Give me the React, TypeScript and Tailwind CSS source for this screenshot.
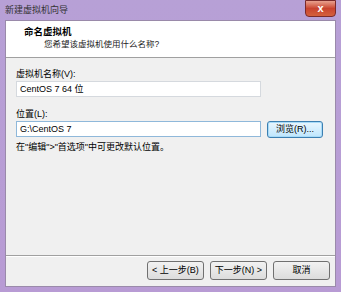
import React from 'react';

export default function App() {
    const font = { fontFamily: '"Liberation Sans", "Noto Sans CJK SC", sans-serif' };
    const btn = 'w-[57px] h-[19px] rounded-[3px] border border-[#707070] bg-gradient-to-b from-[#f2f2f2] to-[#dcdcdc] flex items-center justify-center text-[9px] leading-none whitespace-nowrap';

    return (
        <div className="w-[341px] h-[292px] flex flex-col bg-gradient-to-b from-[#b7a0d6] to-[#b89bd4] text-[9px] text-black" style={font}>
            {/* Title bar */}
            <div className="h-[20px] flex items-start justify-between pl-[5px] pr-[5px] shrink-0">
                <span className="text-[9px] leading-[20px] text-[#333]">新建虚拟机向导</span>
                <div className="w-[31px] h-[17px] rounded-b-[4px] border border-[#7a2a2a] bg-gradient-to-b from-[#e8a08e] via-[#c9432f] to-[#d4603d] flex items-center justify-center">
                    <span className="text-white text-[11px] font-bold leading-none">x</span>
                </div>
            </div>

            {/* Client area */}
            <div className="flex-1 mx-[5px] mb-[5px] border border-[#9a8aaa] bg-[#f0f0f0] flex flex-col">
                {/* Header */}
                <div className="h-[37px] bg-white border-b border-[#a0a0a0] pl-[18px] pt-[4px] shrink-0">
                    <div className="font-bold text-[9.5px] leading-[13px]">命名虚拟机</div>
                    <div className="pl-[20px] text-[8.5px] leading-[13px] text-[#222]">您希望该虚拟机使用什么名称?</div>
                </div>

                {/* Body */}
                <div className="flex-1 px-[10px] pt-[10px] flex flex-col">
                    <label className="leading-[12px]">虚拟机名称(V):</label>
                    <div className="mt-[1px] w-[245px] h-[16px] bg-white border border-[#d5d9de] pl-[3px] leading-[14px]">CentOS 7 64 位</div>

                    <label className="mt-[11px] leading-[12px]">位置(L):</label>
                    <div className="mt-[1px] flex items-start gap-[6px]">
                        <div className="w-[245px] h-[16px] bg-white border border-[#8fb8da] pl-[3px] leading-[14px]">G:\CentOS 7</div>
                        <div className="w-[56px] h-[17px] rounded-[3px] border border-[#3c7fb1] bg-gradient-to-b from-[#eaf6fd] to-[#bee6fd] flex items-center justify-center leading-none whitespace-nowrap shadow-[inset_0_0_0_1px_#a8dbf8]">浏览(R)...</div>
                    </div>
                    <div className="mt-[3px] leading-[12px]">在"编辑"&gt;"首选项"中可更改默认位置。</div>
                </div>

                {/* Footer */}
                <div className="h-[31px] border-t border-[#a0a0a0] shadow-[inset_0_1px_0_#fff] flex items-center justify-end gap-[6px] pr-[5px] pb-[2px] shrink-0">
                    <div className={btn}>&lt; 上一步(B)</div>
                    <div className={btn}>下一步(N) &gt;</div>
                    <div className={btn}>取消</div>
                </div>
            </div>
        </div>
    );
}
